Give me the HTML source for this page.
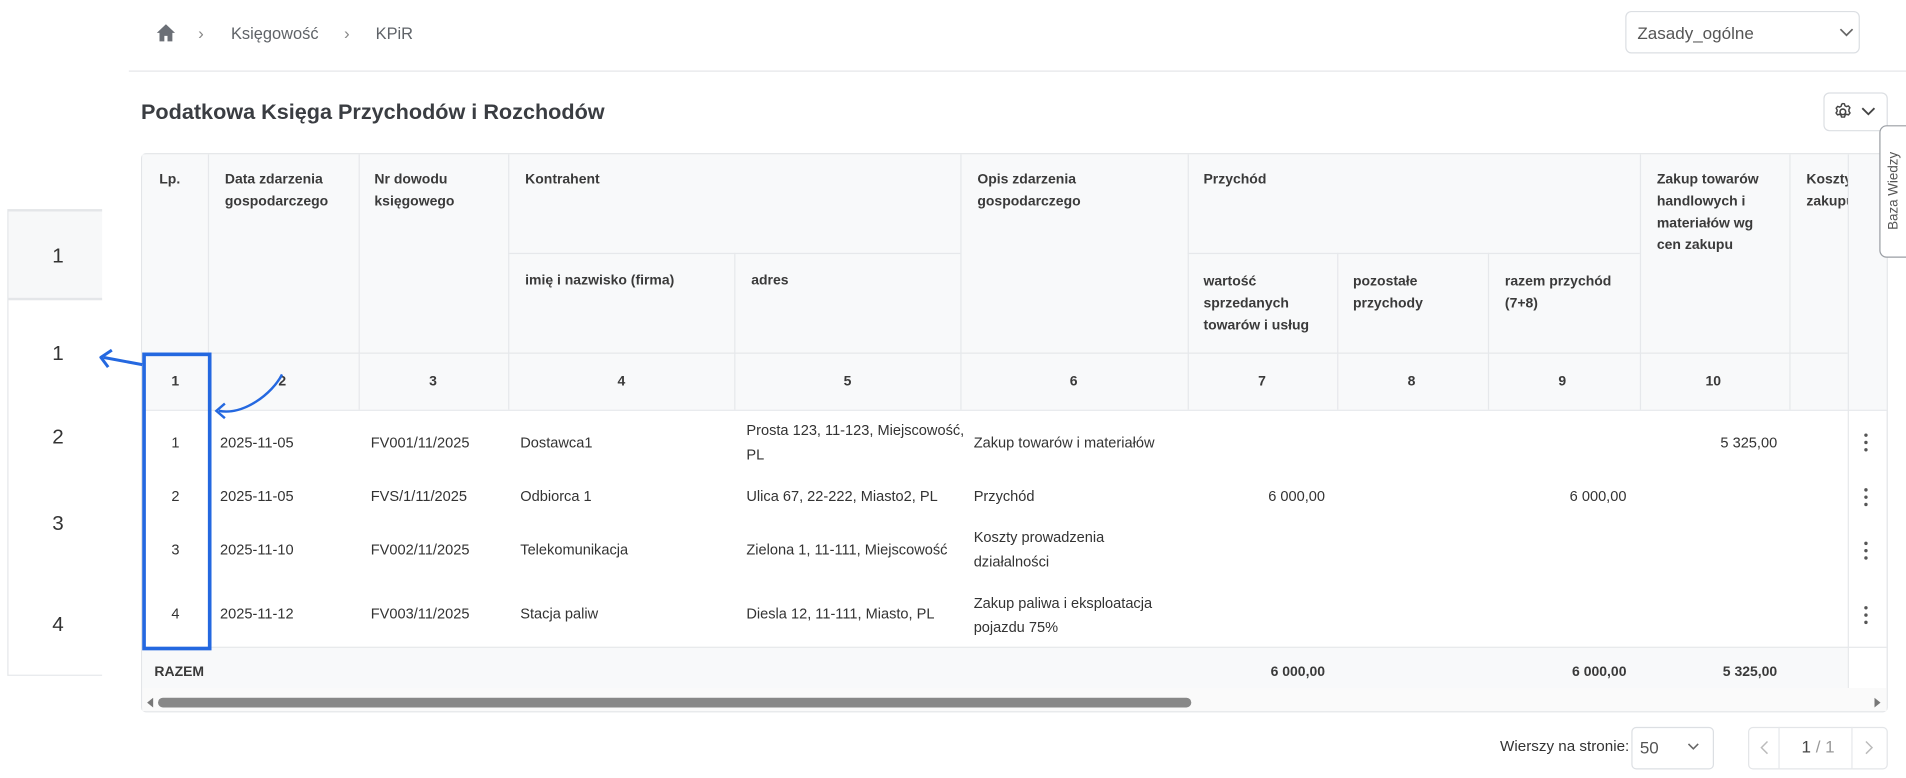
<!DOCTYPE html>
<html><head><meta charset="utf-8"><style>
*{box-sizing:border-box;margin:0;padding:0}
body{width:1906px;height:778px;background:#fff;font-family:"Liberation Sans",sans-serif;color:#333;position:relative;overflow:hidden}
#w{position:absolute;left:0;top:0;width:1568px;height:640px;transform:scale(1.2156);transform-origin:0 0;overflow:hidden}
.abs{position:absolute}
.t{position:absolute;font-size:12px;color:#333;white-space:nowrap;line-height:20px}
.h{font-weight:bold;color:#3a3a3a;font-size:11.5px;line-height:18px}
.vl{position:absolute;width:1px;background:#e6e8eb}
.hl{position:absolute;height:1px;background:#e6e8eb}
</style></head><body><div id="w">
<svg class="abs" style="left:128px;top:19px" width="17" height="16" viewBox="0 0 17 16"><path d="M8.5 1L1 8h2.2v7h4v-4.5h2.6V15h4V8H16z" fill="#6b6f76"/></svg>
<div class="t" style="left:163px;top:17px;color:#888;font-size:14px">›</div>
<div class="t" style="left:190px;top:18px;color:#5f6368;font-size:13.5px">Księgowość</div>
<div class="t" style="left:283px;top:17px;color:#888;font-size:14px">›</div>
<div class="t" style="left:309px;top:18px;color:#5f6368;font-size:13.5px">KPiR</div>
<div class="abs" style="left:1337px;top:9px;width:193px;height:35px;border:1px solid #dcdfe3;border-radius:5px"></div>
<div class="t" style="left:1347px;top:17px;font-size:14px;color:#555">Zasady_ogólne</div>
<svg class="abs" style="left:1513px;top:23px" width="12" height="8"><path d="M1 1l5 5 5-5" stroke="#666" fill="none" stroke-width="1.4"/></svg>
<div class="hl" style="left:106px;top:58px;width:1500px;background:#e4e6e9"></div>
<div class="t" style="left:116px;top:80px;font-size:17.8px;line-height:24px;font-weight:bold;color:#3a3d42">Podatkowa Księga Przychodów i Rozchodów</div>
<div class="abs" style="left:1500px;top:76px;width:53px;height:32px;border:1px solid #dcdfe3;border-radius:5px"></div>
<svg class="abs" style="left:1508px;top:84px" width="16" height="16" viewBox="0 0 16 16"><circle cx="8" cy="8" r="2.3" stroke="#444" fill="none" stroke-width="1.3"/><path d="M8 1.2l1.3.2.4 1.6 1.3.7 1.5-.6 1.3 1.5-.8 1.4v1.6l.9 1.3-1.2 1.6-1.6-.5-1.3.7-.4 1.6H6.9l-.4-1.6-1.3-.7-1.6.5-1.2-1.6.9-1.3V6.4l-.8-1.4 1.3-1.5 1.5.6 1.3-.7.4-1.6z" stroke="#444" fill="none" stroke-width="1.2" stroke-linejoin="round"/></svg>
<svg class="abs" style="left:1531px;top:88px" width="12" height="8"><path d="M1 1l5 5 5-5" stroke="#444" fill="none" stroke-width="1.5"/></svg>
<div class="abs" style="left:116px;top:126px;width:1437px;height:460px;border:1px solid #e3e5e8;border-radius:4px;background:#fff"></div>
<div class="abs" style="left:117px;top:127px;width:1435px;height:210px;background:#f8f9fa"></div>
<div class="abs" style="left:117px;top:532px;width:1403px;height:34px;background:#f8f9fa"></div>
<div class="abs" style="left:117px;top:566px;width:1435px;height:19px;background:#fafafa"></div>
<div class="abs" style="left:130px;top:574px;width:850px;height:8px;background:#888;border-radius:4px"></div>
<svg class="abs" style="left:121px;top:574px" width="6" height="8"><path d="M5 0v8L0 4z" fill="#777"/></svg>
<svg class="abs" style="left:1542px;top:574px" width="6" height="8"><path d="M0 0v8l5-4z" fill="#777"/></svg>
<div class="hl" style="left:418px;top:208px;width:372px"></div>
<div class="hl" style="left:977px;top:208px;width:372px"></div>
<div class="hl" style="left:117px;top:290px;width:1403px"></div>
<div class="hl" style="left:117px;top:337px;width:1435px"></div>
<div class="hl" style="left:117px;top:532px;width:1435px"></div>
<div class="vl" style="left:171px;top:127px;height:210px"></div>
<div class="vl" style="left:295px;top:127px;height:210px"></div>
<div class="vl" style="left:418px;top:127px;height:210px"></div>
<div class="vl" style="left:604px;top:208px;height:129px"></div>
<div class="vl" style="left:790px;top:127px;height:210px"></div>
<div class="vl" style="left:977px;top:127px;height:210px"></div>
<div class="vl" style="left:1100px;top:208px;height:129px"></div>
<div class="vl" style="left:1224px;top:208px;height:129px"></div>
<div class="vl" style="left:1349px;top:127px;height:210px"></div>
<div class="vl" style="left:1472px;top:127px;height:210px"></div>
<div class="vl" style="left:1520px;top:127px;height:439px"></div>
<div class="t h" style="left:131px;top:139px">Lp.</div>
<div class="t h" style="left:185px;top:139px">Data zdarzenia<br>gospodarczego</div>
<div class="t h" style="left:308px;top:139px">Nr dowodu<br>księgowego</div>
<div class="t h" style="left:432px;top:139px">Kontrahent</div>
<div class="t h" style="left:804px;top:139px">Opis zdarzenia<br>gospodarczego</div>
<div class="t h" style="left:990px;top:139px">Przychód</div>
<div class="t h" style="left:1363px;top:139px">Zakup towarów<br>handlowych i<br>materiałów wg<br>cen zakupu</div>
<div class="t h" style="left:1486px;top:139px;width:34px;overflow:hidden">Koszty<br>zakupu</div>
<div class="t h" style="left:432px;top:222px">imię i nazwisko (firma)</div>
<div class="t h" style="left:618px;top:222px">adres</div>
<div class="t h" style="left:990px;top:223px">wartość<br>sprzedanych<br>towarów i usług</div>
<div class="t h" style="left:1113px;top:223px">pozostałe<br>przychody</div>
<div class="t h" style="left:1238px;top:223px">razem przychód<br>(7+8)</div>
<div class="t h" style="left:141px;top:305px">1</div>
<div class="t h" style="left:229px;top:305px">2</div>
<div class="t h" style="left:353px;top:305px">3</div>
<div class="t h" style="left:508px;top:305px">4</div>
<div class="t h" style="left:694px;top:305px">5</div>
<div class="t h" style="left:880px;top:305px">6</div>
<div class="t h" style="left:1035px;top:305px">7</div>
<div class="t h" style="left:1158px;top:305px">8</div>
<div class="t h" style="left:1282px;top:305px">9</div>
<div class="t h" style="left:1403px;top:305px">10</div>
<div class="t" style="left:141px;top:354px">1</div>
<div class="t" style="left:181px;top:354px">2025-11-05</div>
<div class="t" style="left:305px;top:354px">FV001/11/2025</div>
<div class="t" style="left:428px;top:354px">Dostawca1</div>
<div class="t" style="left:614px;top:344px">Prosta 123, 11-123, Miejscowość,<br>PL</div>
<div class="t" style="left:801px;top:354px">Zakup towarów i materiałów</div>
<div class="t" style="left:1360px;top:354px;width:102px;text-align:right">5 325,00</div>
<div class="t" style="left:141px;top:398px">2</div>
<div class="t" style="left:181px;top:398px">2025-11-05</div>
<div class="t" style="left:305px;top:398px">FVS/1/11/2025</div>
<div class="t" style="left:428px;top:398px">Odbiorca 1</div>
<div class="t" style="left:614px;top:398px">Ulica 67, 22-222, Miasto2, PL</div>
<div class="t" style="left:801px;top:398px">Przychód</div>
<div class="t" style="left:990px;top:398px;width:100px;text-align:right">6 000,00</div>
<div class="t" style="left:1236px;top:398px;width:102px;text-align:right">6 000,00</div>
<div class="t" style="left:141px;top:442px">3</div>
<div class="t" style="left:181px;top:442px">2025-11-10</div>
<div class="t" style="left:305px;top:442px">FV002/11/2025</div>
<div class="t" style="left:428px;top:442px">Telekomunikacja</div>
<div class="t" style="left:614px;top:442px">Zielona 1, 11-111, Miejscowość</div>
<div class="t" style="left:801px;top:432px">Koszty prowadzenia<br>działalności</div>
<div class="t" style="left:141px;top:495px">4</div>
<div class="t" style="left:181px;top:495px">2025-11-12</div>
<div class="t" style="left:305px;top:495px">FV003/11/2025</div>
<div class="t" style="left:428px;top:495px">Stacja paliw</div>
<div class="t" style="left:614px;top:495px">Diesla 12, 11-111, Miasto, PL</div>
<div class="t" style="left:801px;top:486px">Zakup paliwa i eksploatacja<br>pojazdu 75%</div>
<div class="t h" style="left:127px;top:544px">RAZEM</div>
<div class="t h" style="left:990px;top:544px;width:100px;text-align:right">6 000,00</div>
<div class="t h" style="left:1236px;top:544px;width:102px;text-align:right">6 000,00</div>
<div class="t h" style="left:1360px;top:544px;width:102px;text-align:right">5 325,00</div>
<svg class="abs" style="left:1533px;top:356px" width="4" height="16"><circle cx="2" cy="2" r="1.4" fill="#555"/><circle cx="2" cy="8" r="1.4" fill="#555"/><circle cx="2" cy="14" r="1.4" fill="#555"/></svg>
<svg class="abs" style="left:1533px;top:401px" width="4" height="16"><circle cx="2" cy="2" r="1.4" fill="#555"/><circle cx="2" cy="8" r="1.4" fill="#555"/><circle cx="2" cy="14" r="1.4" fill="#555"/></svg>
<svg class="abs" style="left:1533px;top:445px" width="4" height="16"><circle cx="2" cy="2" r="1.4" fill="#555"/><circle cx="2" cy="8" r="1.4" fill="#555"/><circle cx="2" cy="14" r="1.4" fill="#555"/></svg>
<svg class="abs" style="left:1533px;top:498px" width="4" height="16"><circle cx="2" cy="2" r="1.4" fill="#555"/><circle cx="2" cy="8" r="1.4" fill="#555"/><circle cx="2" cy="14" r="1.4" fill="#555"/></svg>
<div class="abs" style="left:1546px;top:103px;width:40px;height:109px;border:1px solid #9a9ea4;border-radius:6px;background:#fff"></div>
<div class="t" style="left:1518px;top:147px;font-size:11px;color:#555;transform:rotate(-90deg);width:80px;text-align:center">Baza Wiedzy</div>
<div class="abs" style="left:6px;top:172px;width:78px;height:384px;border-left:1px solid #e4e6e9"></div>
<div class="abs" style="left:7px;top:172px;width:77px;height:75px;background:#f7f8f9;border-top:2px solid #e4e6e9;border-bottom:2px solid #e4e6e9"></div>
<div class="t" style="left:43px;top:199px;font-size:17px;line-height:24px">1</div>
<div class="t" style="left:43px;top:279px;font-size:17px;line-height:24px">1</div>
<div class="t" style="left:43px;top:348px;font-size:17px;line-height:24px">2</div>
<div class="t" style="left:43px;top:419px;font-size:17px;line-height:24px">3</div>
<div class="t" style="left:43px;top:502px;font-size:17px;line-height:24px">4</div>
<div class="hl" style="left:7px;top:555px;width:77px"></div>
<div class="abs" style="left:117px;top:290px;width:57px;height:245px;border:3px solid #2468e0"></div>
<svg class="abs" style="left:0;top:0" width="300" height="400">
<path d="M117 300L85 294" stroke="#2468e0" stroke-width="2.5" fill="none"/>
<path d="M92 288L83 294 89 302" stroke="#2468e0" stroke-width="2.5" fill="none" stroke-linejoin="round"/>
<path d="M232 308C224 324 200 342 180 338" stroke="#2468e0" stroke-width="2" fill="none"/>
<path d="M185 332L178 338 185 344" stroke="#2468e0" stroke-width="2" fill="none"/>
</svg>
<div class="t" style="left:1234px;top:604px;font-size:12.5px">Wierszy na stronie:</div>
<div class="abs" style="left:1342px;top:598px;width:68px;height:35px;border:1px solid #dcdfe3;border-radius:4px"></div>
<div class="t" style="left:1349px;top:605px;font-size:14px;color:#555">50</div>
<svg class="abs" style="left:1388px;top:611px" width="10" height="7"><path d="M1 1l4 4 4-4" stroke="#666" fill="none" stroke-width="1.3"/></svg>
<div class="abs" style="left:1438px;top:598px;width:115px;height:35px;border:1px solid #e3e5e8;border-radius:4px"></div>
<div class="vl" style="left:1463px;top:598px;height:35px"></div>
<div class="vl" style="left:1523px;top:598px;height:35px"></div>
<svg class="abs" style="left:1448px;top:609px" width="7" height="12"><path d="M6 1L1 6l5 5" stroke="#bbb" fill="none" stroke-width="1.2"/></svg>
<svg class="abs" style="left:1534px;top:609px" width="7" height="12"><path d="M1 1l5 5-5 5" stroke="#bbb" fill="none" stroke-width="1.2"/></svg>
<div class="t" style="left:1482px;top:604px;font-size:14px;color:#444">1<span style="color:#999"> / 1</span></div>
</div></body></html>
